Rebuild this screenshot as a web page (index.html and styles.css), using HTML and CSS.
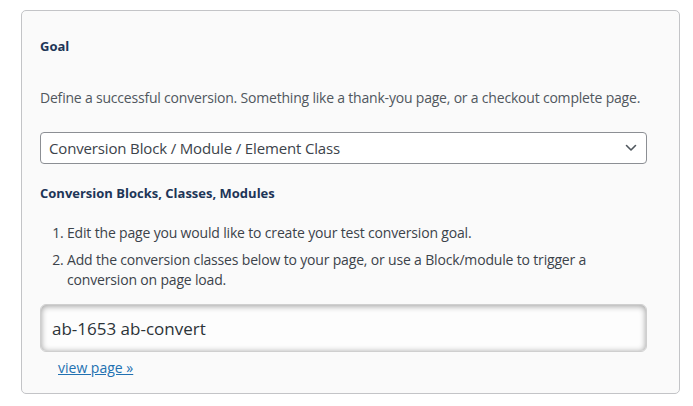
FILE: index.html
```html
<!DOCTYPE html>
<html>
<head>
<meta charset="utf-8">
<link rel="stylesheet" href="styles.css">
</head>
<body>
<div class="card">
  <h2 class="title">Goal</h2>
  <p class="desc">Define a successful conversion. Something like a thank-you page, or a checkout complete page.</p>
  <div class="select">
    <span class="select-text">Conversion Block / Module / Element Class</span>
    <svg class="chev" width="12" height="8" viewBox="0 0 12 8"><path d="M1.5 1.5 L6 6 L10.5 1.5" fill="none" stroke="#50575e" stroke-width="1.6" stroke-linecap="round" stroke-linejoin="round"/></svg>
  </div>
  <h3 class="subtitle">Conversion Blocks, Classes, Modules</h3>
  <ol class="steps">
    <li>Edit the page you would like to create your test conversion goal.</li>
    <li>Add the conversion classes below to your page, or use a Block/module to trigger a conversion on page load.</li>
  </ol>
  <div class="classes">ab-1653 ab-convert</div>
  <a class="link" href="#">view page »</a>
</div>
</body>
</html>
```
FILE: styles.css
```css
html, body {
  margin: 0;
  padding: 0;
  background: #ffffff;
}
body {
  font-family: "Open Sans", "Noto Sans", sans-serif;
  color: #3c434a;
}
.card {
  box-sizing: border-box;
  margin: 10px 0 0 21px;
  width: 659px;
  height: 384px;
  border: 1px solid #c3c4c7;
  border-radius: 5px;
  background: #fafafa;
  padding: 25px 32px 0 18px;
}
.title {
  margin: 0;
  font-size: 13px;
  line-height: 20px;
  font-weight: 700;
  color: #1d3557;
}
.desc {
  margin: 32px 0 0;
  font-size: 14px;
  line-height: 20px;
  letter-spacing: -0.2px;
  color: #50575e;
  white-space: nowrap;
}
.select {
  box-sizing: border-box;
  margin-top: 24px;
  height: 32px;
  border: 1px solid #8c8f94;
  border-radius: 4px;
  background: #fff;
  display: flex;
  align-items: center;
  justify-content: space-between;
  padding: 0 9px 0 8px;
}
.select-text {
  font-size: 15px;
  letter-spacing: -0.15px;
  color: #3c434a;
}
.chev {
  display: block;
}
.subtitle {
  margin: 19px 0 0;
  font-size: 13px;
  line-height: 20px;
  font-weight: 700;
  color: #1d3557;
}
.steps {
  margin: 20px 0 0;
  padding-left: 27px;
  font-size: 14px;
  line-height: 20px;
  letter-spacing: -0.17px;
  color: #3c434a;
}
.steps li + li {
  margin-top: 7px;
}
.classes {
  box-sizing: border-box;
  margin-top: 14px;
  height: 48px;
  border-radius: 6px;
  background: #fdfdfd;
  box-shadow: inset 0 1px 6px rgba(0,0,0,0.4);
  border: 1px solid #cfcfcf;
  display: flex;
  align-items: center;
  padding-left: 11px;
  font-size: 17px;
  color: #2c3338;
}
.link {
  display: inline-block;
  margin: 6px 0 0 18px;
  font-size: 14px;
  line-height: 20px;
  color: #2271b1;
}
```
